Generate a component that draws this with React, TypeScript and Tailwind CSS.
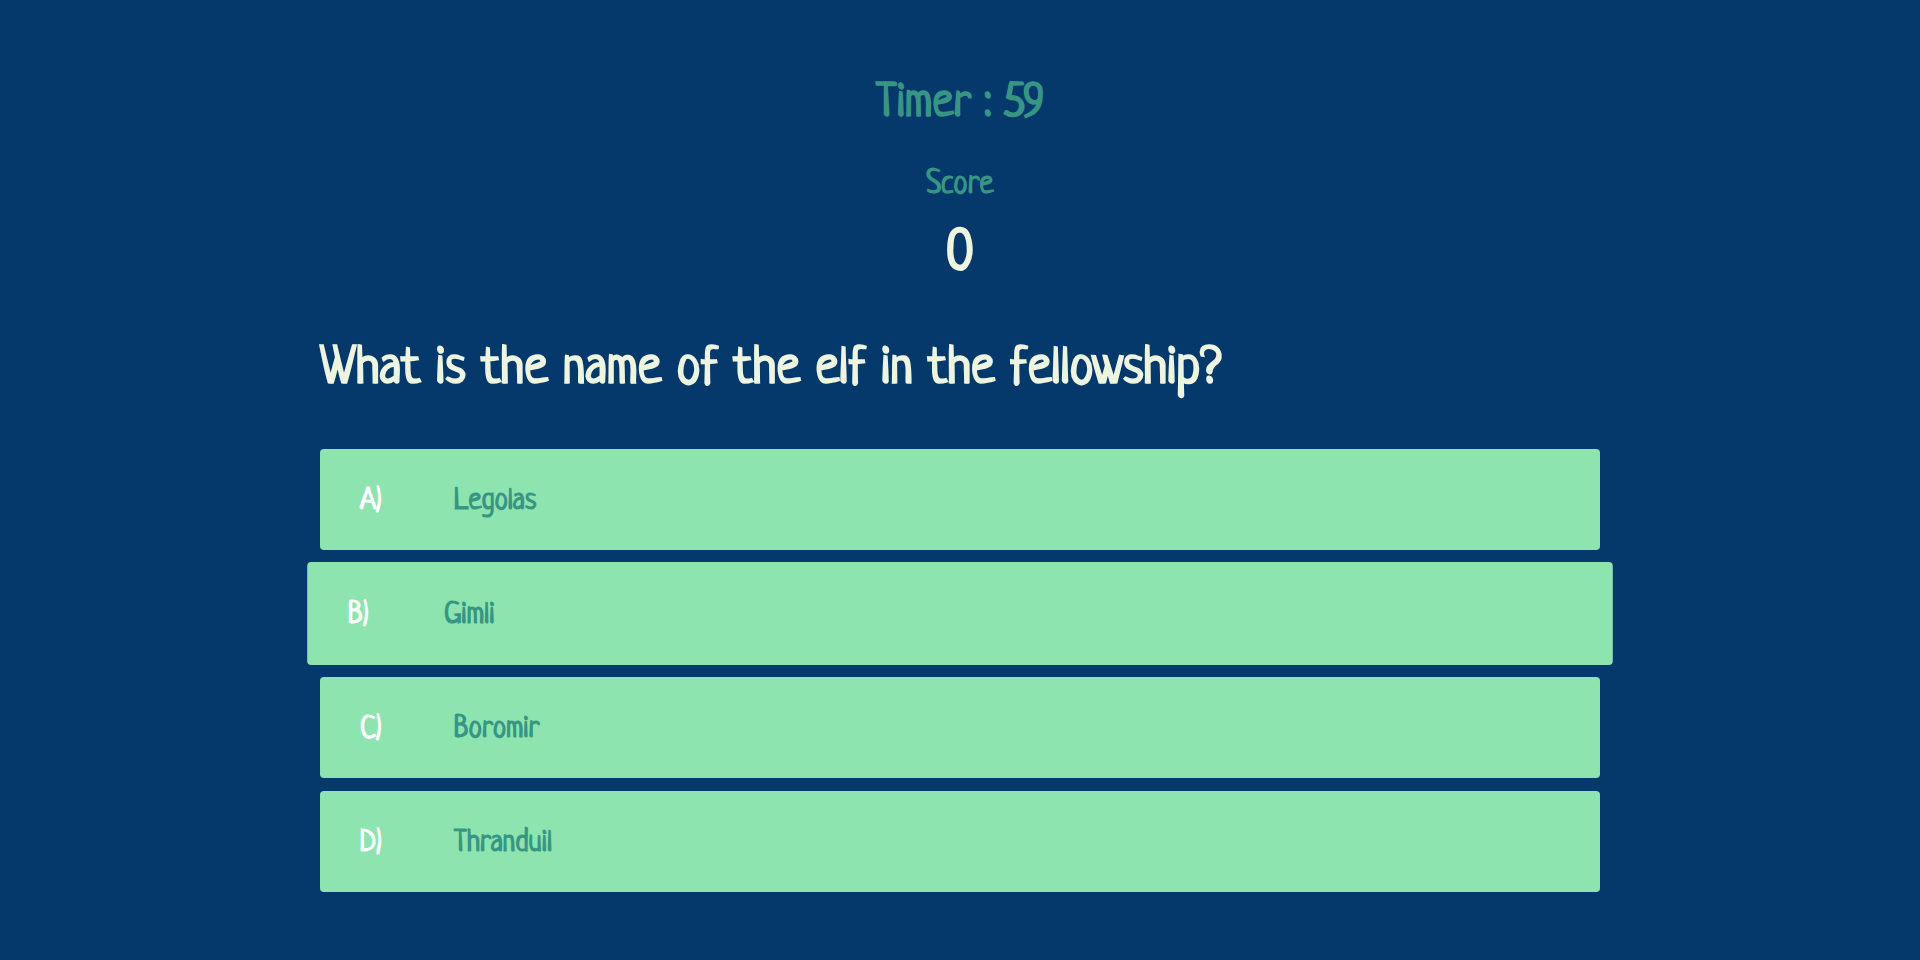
const answers = [
  { letter: "A", text: "Legolas" },
  { letter: "B", text: "Gimli", active: true },
  { letter: "C", text: "Boromir" },
  { letter: "D", text: "Thranduil" },
];

export default function App() {
  return (
    <div className="flex min-h-screen justify-center bg-[#05386b] px-8 pt-[69px] pb-16 font-['Neucha','Open_Sans',sans-serif] font-bold text-[#379683]">
      <main className="w-full max-w-7xl">
        <header className="flex flex-col items-center">
          <p className="text-[48px] leading-[72px]">Timer : 59</p>
          <p className="mt-[22px] text-[32px] leading-[44px]">Score</p>
          <p className="mt-3 text-[56px] leading-[72px] text-[#edf5e1]">0</p>
        </header>
        <h1 className="mt-[43px] text-[54px] leading-[72px] text-[#edf5e1]">
          What is the name of the elf in the fellowship?
        </h1>
        <div className="mt-[43px] flex flex-col gap-[13px]">
          {answers.map((answer) => (
            <button
              key={answer.letter}
              type="button"
              className={`flex h-[101px] w-full cursor-pointer items-center rounded-[4px] bg-[#8ee4af] px-10 pt-1 text-left text-[30px] leading-[40px] hover:scale-[1.02] ${answer.active ? "scale-[1.02]" : ""}`}
            >
              <span className="w-[94px] text-white">{answer.letter})</span>
              <span>{answer.text}</span>
            </button>
          ))}
        </div>
      </main>
    </div>
  );
}
